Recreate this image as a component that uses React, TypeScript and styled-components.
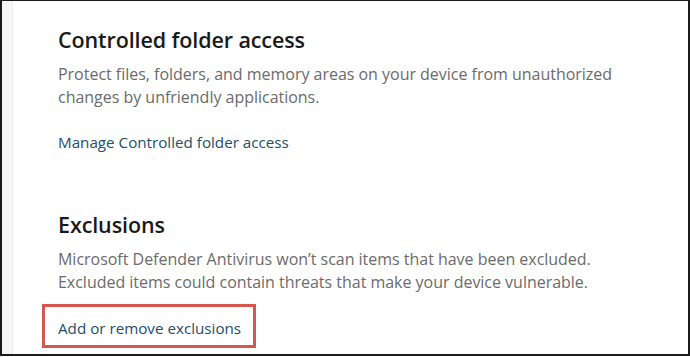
import React from "react";
import styled, { createGlobalStyle } from "styled-components";

const Global = createGlobalStyle`
  html, body { margin: 0; padding: 0; background: #ffffff; }
  * { box-sizing: border-box; }
`;

const Frame = styled.div`
  width: 690px;
  height: 356px;
  border-style: solid;
  border-color: #1b1b1b;
  border-width: 1px 2px 2px 2px;
  display: flex;
  overflow: hidden;
  background: #ffffff;
  font-family: "Open Sans", "Noto Sans", sans-serif;
`;

const SideStrip = styled.div`
  width: 11px;
  flex: none;
  background: #f7f7f7;
  border-right: 1px solid #efefef;
`;

const Content = styled.main`
  flex: 1;
  padding: 24px 0 0 45px;
  display: flex;
  flex-direction: column;
`;

const Section = styled.section<{ $gap?: number }>`
  display: flex;
  flex-direction: column;
  margin-top: ${(p) => p.$gap ?? 0}px;
`;

const Title = styled.h2`
  margin: 0;
  font-size: 21.5px;
  font-weight: 600;
  color: #1a1a1a;
  line-height: 30px;
  letter-spacing: -0.1px;
`;

const Desc = styled.p`
  margin: 8px 0 0 0;
  font-size: 16px;
  line-height: 23px;
  color: #6b6b6b;
  letter-spacing: -0.02px;
`;

const LinkBox = styled.div<{ $highlight?: boolean; $top: number }>`
  align-self: flex-start;
  margin-top: ${(p) => p.$top}px;
  margin-left: ${(p) => (p.$highlight ? "-16px" : "0")};
  padding: ${(p) => (p.$highlight ? "11px 12px 7px 13px" : "0")};
  border: ${(p) => (p.$highlight ? "3px solid #d4584d" : "none")};
`;

const Link = styled.a`
  font-size: 15.2px;
  line-height: 20px;
  color: #234e6c;
  text-decoration: none;
  display: block;
`;

export default function App() {
  return (
    <>
      <Global />
      <Frame>
        <SideStrip />
        <Content>
          <Section>
            <Title>Controlled folder access</Title>
            <Desc>
              Protect files, folders, and memory areas on your device from unauthorized
              <br />
              changes by unfriendly applications.
            </Desc>
            <LinkBox $top={23}>
              <Link>Manage Controlled folder access</Link>
            </LinkBox>
          </Section>
          <Section $gap={58}>
            <Title>Exclusions</Title>
            <Desc>
              Microsoft Defender Antivirus won’t scan items that have been excluded.
              <br />
              Excluded items could contain threats that make your device vulnerable.
            </Desc>
            <LinkBox $highlight $top={10}>
              <Link>Add or remove exclusions</Link>
            </LinkBox>
          </Section>
        </Content>
      </Frame>
    </>
  );
}
